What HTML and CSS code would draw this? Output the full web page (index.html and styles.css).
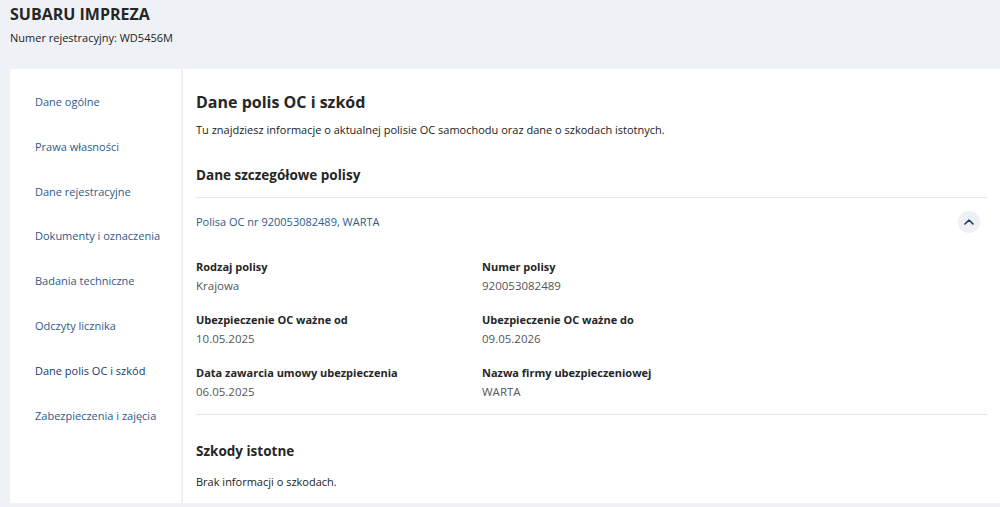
FILE: index.html
```html
<!DOCTYPE html>
<html lang="pl">
<head>
<meta charset="utf-8">
<link rel="stylesheet" href="styles.css">
</head>
<body>
<header class="head">
  <h1 class="car">SUBARU IMPREZA</h1>
  <p class="reg">Numer rejestracyjny: WD5456M</p>
</header>
<div class="layout">
  <nav class="side">
    <a class="nav-item">Dane ogólne</a>
    <a class="nav-item">Prawa własności</a>
    <a class="nav-item">Dane rejestracyjne</a>
    <a class="nav-item">Dokumenty i oznaczenia</a>
    <a class="nav-item">Badania techniczne</a>
    <a class="nav-item">Odczyty licznika</a>
    <a class="nav-item active">Dane polis OC i szkód</a>
    <a class="nav-item">Zabezpieczenia i zajęcia</a>
  </nav>
  <main class="main">
    <h2 class="title">Dane polis OC i szkód</h2>
    <p class="desc">Tu znajdziesz informacje o aktualnej polisie OC samochodu oraz dane o szkodach istotnych.</p>
    <h3 class="section">Dane szczegółowe polisy</h3>
    <div class="policy">
      <div class="policy-head">
        <span class="policy-link">Polisa OC nr 920053082489, WARTA</span>
        <span class="toggle"><svg width="10" height="6" viewBox="0 0 10 6"><path d="M1 5 L5 1 L9 5" fill="none" stroke="#1e3a5f" stroke-width="1.6" stroke-linecap="round" stroke-linejoin="round"/></svg></span>
      </div>
      <div class="fields">
        <div class="field"><div class="label">Rodzaj polisy</div><div class="value">Krajowa</div></div>
        <div class="field"><div class="label">Numer polisy</div><div class="value">920053082489</div></div>
        <div class="field"><div class="label">Ubezpieczenie OC ważne od</div><div class="value">10.05.2025</div></div>
        <div class="field"><div class="label">Ubezpieczenie OC ważne do</div><div class="value">09.05.2026</div></div>
        <div class="field"><div class="label">Data zawarcia umowy ubezpieczenia</div><div class="value">06.05.2025</div></div>
        <div class="field"><div class="label">Nazwa firmy ubezpieczeniowej</div><div class="value">WARTA</div></div>
      </div>
    </div>
    <h3 class="section damages">Szkody istotne</h3>
    <p class="desc">Brak informacji o szkodach.</p>
  </main>
</div>
</body>
</html>
```
FILE: styles.css
```css
* { box-sizing: border-box; }
html, body { margin: 0; padding: 0; }
body {
  background: #eef2f7;
  font-family: "Open Sans", "Noto Sans", sans-serif;
  color: #222;
  width: 1000px;
  height: 507px;
  overflow: hidden;
}
.head { padding: 3px 10px 0; height: 69px; }
.car { margin: 0; font-size: 16px; font-weight: 700; line-height: 22px; color: #262626; }
.reg { margin: 5px 0 0; font-size: 11px; line-height: 16px; color: #222; }
.layout { display: flex; gap: 2px; padding-left: 10px; }
.side {
  width: 171px;
  background: #fff;
  height: 434px;
  display: flex;
  flex-direction: column;
  padding: 24px 0 0 25px;
  border-radius: 2px 0 0 2px;
}
.nav-item {
  font-size: 11px;
  line-height: 18px;
  height: 44.8px;
  flex: none;
  color: #2e5b8a;
}
.nav-item.active { color: #173c66; }
.main {
  flex: 1;
  background: #fff;
  height: 434px;
  padding: 21px 13px 0 13px;
}
.title { margin: 0; font-size: 16px; line-height: 24px; font-weight: 700; color: #262626; }
.desc { margin: 7px 0 0; font-size: 11px; line-height: 18px; }
.section { margin: 26px 0 0; font-size: 13.5px; line-height: 20px; font-weight: 700; color: #262626; }
.policy {
  margin-top: 12px;
  border-top: 1px solid #e3e6ea;
  border-bottom: 1px solid #e3e6ea;
  padding-bottom: 13px;
}
.policy-head {
  display: flex;
  justify-content: space-between;
  align-items: center;
  padding: 12px 7px 0 0;
  height: 35px;
}
.policy-link { font-size: 11px; color: #2e5b8a; }
.toggle {
  width: 22px; height: 22px; border-radius: 50%;
  background: #edf1f6;
  display: flex; align-items: center; justify-content: center;
}
.fields {
  display: grid;
  grid-template-columns: 286px 1fr;
  row-gap: 16px;
  padding-top: 25px;
}
.label { font-size: 11px; font-weight: 700; line-height: 18px; color: #262626; }
.value { font-size: 11.5px; line-height: 18px; color: #555; margin-top: 1px; }
.section.damages { margin-top: 26px; }
.damages + .desc { margin-top: 12px; }
```
